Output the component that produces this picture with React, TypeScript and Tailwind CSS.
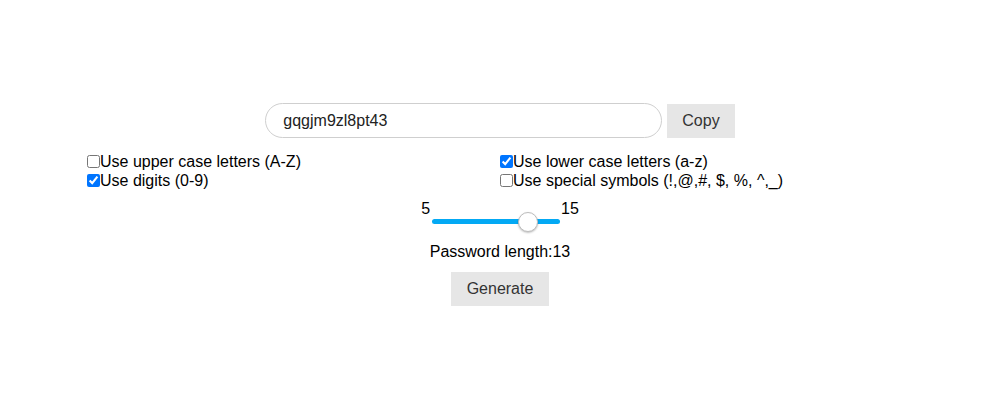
import { useState } from 'react';

const OPTIONS = [
  { key: 'upper', label: 'Use upper case letters (A-Z)', on: false },
  { key: 'lower', label: 'Use lower case letters (a-z)', on: true },
  { key: 'digits', label: 'Use digits (0-9)', on: true },
  { key: 'special', label: 'Use special symbols (!,@,#, $, %, ^,_)', on: false },
];

export default function App() {
  const [password] = useState('gqgjm9zl8pt43');
  const [length, setLength] = useState(13);
  const [opts, setOpts] = useState<Record<string, boolean>>(
    Object.fromEntries(OPTIONS.map((o) => [o.key, o.on])),
  );

  return (
    <div
      className="w-[1000px] h-[400px] bg-white text-black text-[16px] pt-[103px]"
      style={{ fontFamily: '"Liberation Sans", Arial, sans-serif' }}
    >
      {/* Password field */}
      <div className="flex justify-center items-center gap-[5px]">
        <input
          readOnly
          value={password}
          className="w-[397px] h-[35px] rounded-full border border-[#cfcfcf] px-[17px] text-[16px] text-[#222] outline-none"
        />
        <button className="h-[34px] px-[15px] bg-[#e6e6e6] text-[#333] text-[16px]">Copy</button>
      </div>

      {/* Options */}
      <div className="w-[826px] mx-auto mt-[14px] grid grid-cols-2 leading-[19px]">
        {OPTIONS.map((o) => (
          <label key={o.key} className="flex items-center">
            <input
              type="checkbox"
              checked={opts[o.key]}
              onChange={() => setOpts((p) => ({ ...p, [o.key]: !p[o.key] }))}
              className="w-[13px] h-[13px] m-0"
            />
            <span>{o.label}</span>
          </label>
        ))}
      </div>

      {/* Length slider */}
      <div className="flex justify-center items-start mt-[10px] leading-[18px]">
        <span className="mr-[2px]">5</span>
        <input
          type="range"
          min={5}
          max={15}
          value={length}
          onChange={(e) => setLength(Number(e.target.value))}
          className="mt-[19px] w-[128px] h-[5px] appearance-none rounded-full bg-[#03a9f4] outline-none [&::-webkit-slider-thumb]:appearance-none [&::-webkit-slider-thumb]:w-[20px] [&::-webkit-slider-thumb]:h-[20px] [&::-webkit-slider-thumb]:rounded-full [&::-webkit-slider-thumb]:bg-white [&::-webkit-slider-thumb]:border [&::-webkit-slider-thumb]:border-[#bdbdbd] [&::-webkit-slider-thumb]:shadow-[0_1px_2px_rgba(0,0,0,0.25)]"
        />
        <span className="ml-px">15</span>
      </div>

      <p className="text-center mt-[19px] leading-[18px]">Password length:{length}</p>

      <div className="flex justify-center mt-[11px]">
        <button className="h-[34px] px-[16px] bg-[#e6e6e6] text-[#333] text-[16px]">Generate</button>
      </div>
    </div>
  );
}
